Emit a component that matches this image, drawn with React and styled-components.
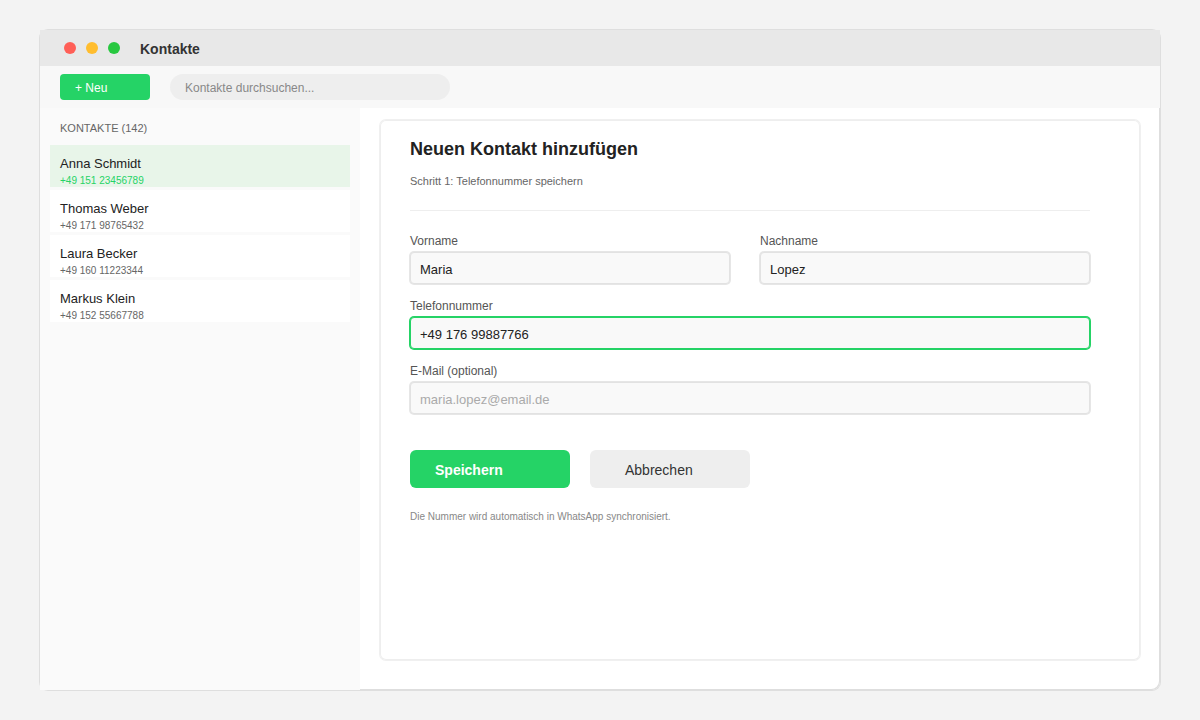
import React, { useState } from 'react'
import styled, { createGlobalStyle } from 'styled-components'

const contacts = [
  { id: 1, name: 'Anna Schmidt', phone: '+49 151 23456789' },
  { id: 2, name: 'Thomas Weber', phone: '+49 171 98765432' },
  { id: 3, name: 'Laura Becker', phone: '+49 160 11223344' },
  { id: 4, name: 'Markus Klein', phone: '+49 152 55667788' },
]

const App = () => {
  const [selected, setSelected] = useState(1)
  const [q, setQ] = useState('')
  const [firstName, setFirstName] = useState('Maria')
  const [lastName, setLastName] = useState('Lopez')
  const [phone, setPhone] = useState('+49 176 99887766')
  const [email, setEmail] = useState('')

  const rows = contacts.filter(c => c.name.toLowerCase().indexOf(q.toLowerCase()) > -1)

  return (
    <Page>
      <GlobalStyle />
      <Window>
        <TitleBar>
          <Dots>
            <Dot $color="#ff5f57" />
            <Dot $color="#ffbd2e" />
            <Dot $color="#28c840" />
          </Dots>
          <WindowTitle>Kontakte</WindowTitle>
        </TitleBar>

        <Toolbar>
          <NewButton type="button">+ Neu</NewButton>
          <Search
            type="search"
            aria-label="Kontakte durchsuchen"
            placeholder="Kontakte durchsuchen..."
            value={q}
            onChange={e => setQ(e.target.value)}
          />
        </Toolbar>

        <Body>
          <Sidebar>
            <ListTitle>KONTAKTE (142)</ListTitle>
            <List>
              {rows.map(c => (
                <li key={c.id}>
                  <Contact type="button" $active={c.id === selected} onClick={() => setSelected(c.id)}>
                    <Name>{c.name}</Name>
                    <Phone $active={c.id === selected}>{c.phone}</Phone>
                  </Contact>
                </li>
              ))}
            </List>
          </Sidebar>

          <Main>
            <Card>
              <Title>Neuen Kontakt hinzufügen</Title>
              <Step>Schritt 1: Telefonnummer speichern</Step>
              <Divider />
              <Form onSubmit={e => e.preventDefault()}>
                <Field>
                  <Label htmlFor="firstName">Vorname</Label>
                  <Input id="firstName" value={firstName} onChange={e => setFirstName(e.target.value)} />
                </Field>
                <Field>
                  <Label htmlFor="lastName">Nachname</Label>
                  <Input id="lastName" value={lastName} onChange={e => setLastName(e.target.value)} />
                </Field>
                <Field $wide>
                  <Label htmlFor="phone">Telefonnummer</Label>
                  <Input id="phone" type="tel" $active value={phone} onChange={e => setPhone(e.target.value)} />
                </Field>
                <Field $wide>
                  <Label htmlFor="email">E-Mail (optional)</Label>
                  <Input
                    id="email"
                    type="email"
                    placeholder="maria.lopez@email.de"
                    value={email}
                    onChange={e => setEmail(e.target.value)}
                  />
                </Field>
                <Actions>
                  <SaveButton type="submit">Speichern</SaveButton>
                  <CancelButton type="button">Abbrechen</CancelButton>
                </Actions>
              </Form>
              <Note>Die Nummer wird automatisch in WhatsApp synchronisiert.</Note>
            </Card>
          </Main>
        </Body>
      </Window>
    </Page>
  )
}

export default App

const GlobalStyle = createGlobalStyle`
  * {
    box-sizing: border-box;
  }

  body {
    margin: 0;
    background: #f3f3f3;
    color: #222;
    font-family: "Liberation Sans", Arial, sans-serif;
  }

  button, input {
    font-family: inherit;
    margin: 0;
  }

  h1, h2, h3, p, ul {
    margin: 0;
    padding: 0;
  }
`

const Page = styled.div`
  display: flex;
  min-height: 100vh;
  padding: 30px 40px;
`

const Window = styled.div`
  display: flex;
  flex: 1;
  flex-direction: column;
  min-width: 0;
  background: #fff;
  border-radius: 8px;
  box-shadow: 0 0 0 1px #dedede;
`

const TitleBar = styled.header`
  display: flex;
  align-items: center;
  gap: 20px;
  height: 36px;
  padding: 0 24px;
  background: #e8e8e8;
`

const Dots = styled.div`
  display: flex;
  gap: 10px;
`

const Dot = styled.span`
  width: 12px;
  height: 12px;
  border-radius: 50%;
  background: ${p => p.$color};
`

const WindowTitle = styled.h1`
  padding-top: 2px;
  font-size: 14px;
  line-height: 16px;
  color: #333;
`

const Toolbar = styled.div`
  display: flex;
  align-items: center;
  gap: 20px;
  height: 42px;
  padding: 0 20px;
  background: #f8f8f8;
`

const NewButton = styled.button`
  width: 90px;
  height: 26px;
  padding: 2px 15px 0;
  border: 0;
  border-radius: 4px;
  background: #25d366;
  color: #fff;
  font-size: 12px;
  text-align: left;
`

const Search = styled.input`
  width: 280px;
  height: 26px;
  padding: 2px 15px 0;
  border: 0;
  border-radius: 13px;
  outline: none;
  appearance: none;
  background: #eee;
  color: #222;
  font-size: 12px;

  &::placeholder {
    color: #888;
    opacity: 1;
  }
`

const Body = styled.div`
  display: flex;
  flex: 1;
`

const Sidebar = styled.aside`
  flex: 0 0 320px;
  padding: 12px 10px;
  background: #fafafa;
`

const ListTitle = styled.h2`
  padding: 0 10px;
  font-size: 11px;
  font-weight: normal;
  line-height: 16px;
  color: #666;
`

const List = styled.ul`
  display: flex;
  flex-direction: column;
  gap: 3px;
  margin-top: 9px;
  list-style: none;
`

const Contact = styled.button`
  display: flex;
  flex-direction: column;
  width: 100%;
  height: 42px;
  padding: 11px 10px 0;
  border: 0;
  background: ${p => (p.$active ? '#e8f5e9' : '#fff')};
  text-align: left;
`

const Name = styled.span`
  font-size: 13px;
  line-height: 16px;
  color: #222;
`

const Phone = styled.span`
  padding-top: 3px;
  font-size: 10px;
  line-height: 12px;
  color: ${p => (p.$active ? '#25d366' : '#666')};
`

const Main = styled.main`
  display: flex;
  flex: 1;
  min-width: 0;
  padding: 12px 20px 30px;
  border-bottom-right-radius: 8px;
  box-shadow: inset -1px -1px 0 #dedede;
`

const Card = styled.section`
  flex: 1;
  min-width: 0;
  padding: 19px 50px 19px 30px;
  border-radius: 6px;
  box-shadow: 0 0 0 1px #f0f0f0, inset 0 0 0 1px #eee;
`

const Title = styled.h2`
  font-size: 18px;
  line-height: 20px;
`

const Step = styled.p`
  margin-top: 14px;
  font-size: 11px;
  line-height: 16px;
  color: #666;
`

const Divider = styled.hr`
  height: 1px;
  margin: 21px 0 22px;
  border: 0;
  background: #eee;
`

const Form = styled.form`
  display: grid;
  grid-template-columns: 32fr 33fr;
  gap: 14px 30px;
`

const Field = styled.div`
  display: flex;
  flex-direction: column;
  gap: 3px;
  ${p => p.$wide && 'grid-column: 1 / -1;'}
`

const Label = styled.label`
  font-size: 12px;
  line-height: 16px;
  color: #555;
`

const Input = styled.input`
  width: 100%;
  height: 32px;
  padding: 2px 9px 0;
  border: 1px solid ${p => (p.$active ? '#25d366' : '#e2e2e2')};
  border-radius: 4px;
  outline: none;
  box-shadow: 0 0 0 1px ${p => (p.$active ? '#25d366' : '#e6e6e6')};
  background: #f9f9f9;
  color: #222;
  font-size: 13px;

  &::placeholder {
    color: #aaa;
    opacity: 1;
  }
`

const Actions = styled.div`
  display: flex;
  grid-column: 1 / -1;
  gap: 20px;
  margin-top: 22px;
`

const FormButton = styled.button`
  width: 160px;
  height: 38px;
  border: 0;
  border-radius: 6px;
  font-size: 14px;
  text-align: left;
`

const SaveButton = styled(FormButton)`
  padding: 2px 25px 0;
  background: #25d366;
  color: #fff;
  font-weight: bold;
`

const CancelButton = styled(FormButton)`
  padding: 2px 35px 0;
  background: #eee;
  color: #333;
`

const Note = styled.p`
  margin-top: 22px;
  font-size: 10px;
  line-height: 14px;
  color: #888;
`
